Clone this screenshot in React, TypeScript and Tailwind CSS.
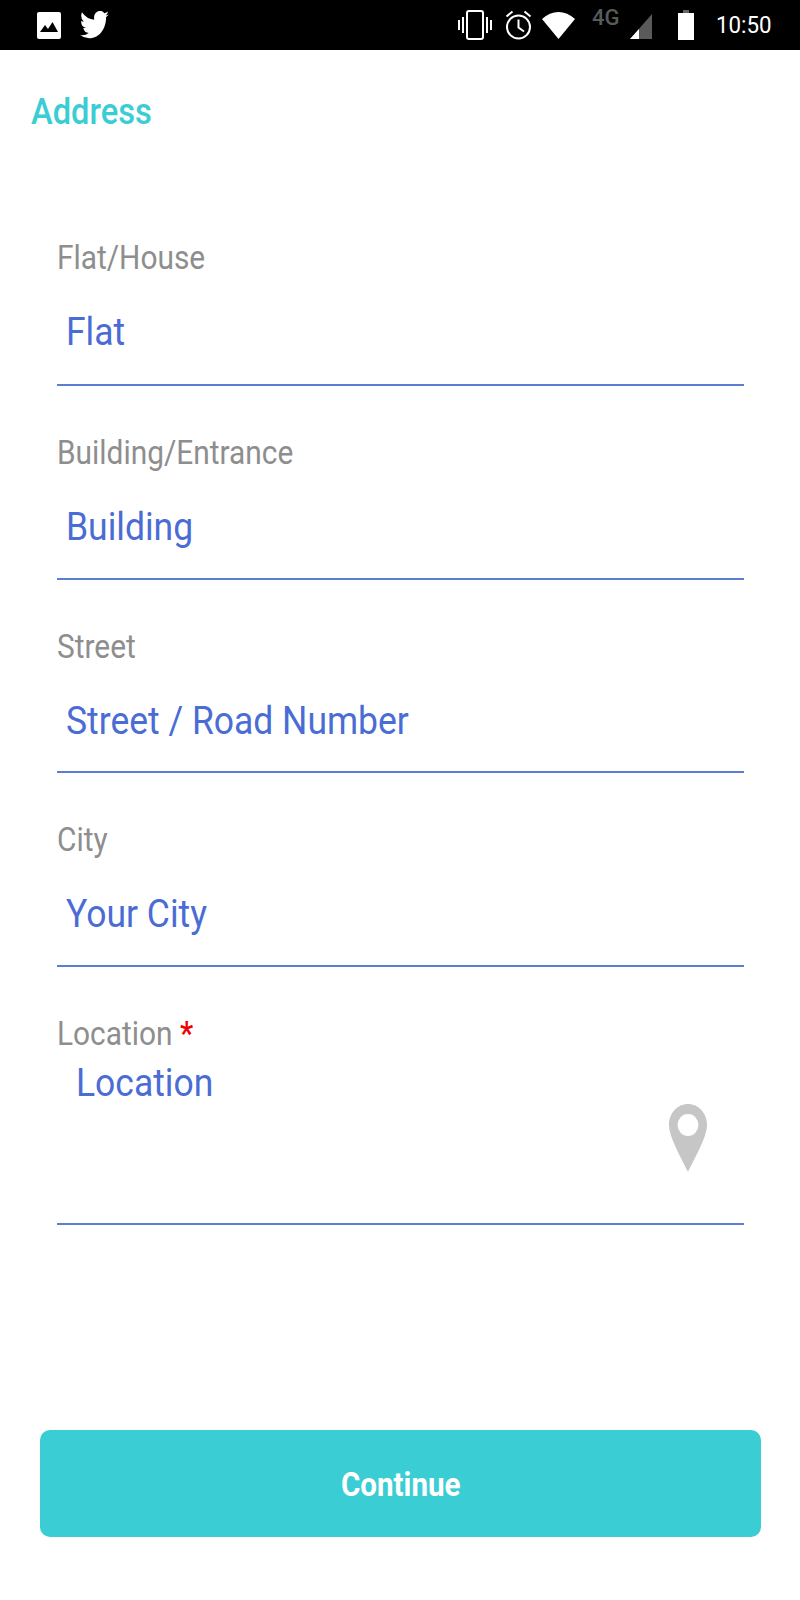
const fields = [
  { label: 'Flat/House', value: 'Flat' },
  { label: 'Building/Entrance', value: 'Building' },
  { label: 'Street', value: 'Street / Road Number' },
  { label: 'City', value: 'Your City' },
]

function StatusBar() {
  return (
    <div className="flex h-[50px] items-center justify-between bg-black pl-[37px] pr-[29px] text-white">
      <div className="flex items-center gap-[19px]">
        {/* image notification */}
        <svg width="24" height="27" viewBox="0 0 24 27">
          <rect x="0" y="0" width="24" height="27" rx="2" fill="#fff" />
          <path d="M3 20 L8 13 L11 17 L15.5 10 L21 20 Z" fill="#000" />
        </svg>
        {/* twitter */}
        <svg width="29" height="28" viewBox="0 1 24 19.5" preserveAspectRatio="none" fill="#fff">
          <path d="M23.95 3.3a9.8 9.8 0 0 1-2.82.77 4.9 4.9 0 0 0 2.16-2.71 9.9 9.9 0 0 1-3.12 1.19 4.92 4.92 0 0 0-8.38 4.48A14 14 0 0 1 1.64 1.9a4.82 4.82 0 0 0-.67 2.47 4.92 4.92 0 0 0 2.19 4.1 4.9 4.9 0 0 1-2.23-.62v.06a4.92 4.92 0 0 0 3.95 4.83 5 5 0 0 1-2.21.08 4.94 4.94 0 0 0 4.6 3.42A9.87 9.87 0 0 1 0 17.77 14 14 0 0 0 7.55 20c9.05 0 14-7.5 14-13.98 0-.21 0-.42-.02-.63a9.9 9.9 0 0 0 2.46-2.55z" />
        </svg>
      </div>
      <div className="flex items-center">
        {/* vibrate */}
        <svg width="34" height="30" viewBox="0 0 34 30" fill="none" stroke="#fff" strokeWidth="2">
          <rect x="9" y="1" width="16" height="28" rx="2" />
          <path d="M5 7v16M1 10v10M29 7v16M33 10v10" />
        </svg>
        {/* alarm */}
        <svg className="ml-[13px]" width="27" height="30" viewBox="0 0 27 30" fill="none" stroke="#fff" strokeWidth="2">
          <circle cx="13.5" cy="17" r="11.5" />
          <path d="M13.5 9.5v8l5.5 4M1.5 6.5l6-5M25.5 6.5l-6-5" />
        </svg>
        {/* wifi */}
        <svg className="ml-[10px]" width="33" height="28" viewBox="0 0 33 28">
          <path d="M0 8 C10 -1.5 23 -1.5 33 8 L16.5 28 Z" fill="#fff" />
        </svg>
        <div className="relative ml-[18px] h-[30px] w-[85px]">
          <span className="absolute left-[-1px] top-[-4px] text-[22px] font-medium leading-[24px] text-[#5a5a5a]">4G</span>
          {/* signal */}
          <svg className="absolute left-[37px] top-[4px]" width="22" height="25" viewBox="0 0 22 25">
            <path d="M0 25 L22 0 V25 Z" fill="#5a5a5a" />
            <path d="M0 25 L9 15 V25 Z" fill="#fff" />
          </svg>
        </div>
        {/* battery */}
        <svg width="16" height="30" viewBox="0 0 16 30">
          <path d="M5 0h6v3h5v27H0V3h5z" fill="#fff" />
          <rect x="5" y="0" width="6" height="3" fill="#666" />
        </svg>
        <div className="ml-[22px] w-[55px]">
          <span className="block origin-left scale-x-[0.93] whitespace-nowrap text-[24px] leading-none">10:50</span>
        </div>
      </div>
    </div>
  )
}

function Field({ label, value }: { label: string; value: string }) {
  return (
    <div className="h-[193.5px] border-b-2 border-[#5b7fd0] pt-[49px] first:h-[193px] first:pt-[47px]">
      <div className="origin-left scale-x-[0.905] text-[33px] leading-[36px] text-[#8e8e8e]">{label}</div>
      <div className="mt-[34px] origin-left translate-x-[9px] scale-x-[0.91] text-[39px] leading-[44px] text-[#4a6cd4]">
        {value}
      </div>
    </div>
  )
}

export default function App() {
  return (
    <div className="flex h-[1600px] w-[800px] flex-col bg-white font-['Roboto',sans-serif]">
      <StatusBar />
      <div className="origin-left translate-x-[31px] scale-x-[0.907] pt-[40px] text-[36px] font-medium leading-[44px] text-[#3acdd4]">
        Address
      </div>
      <div className="mx-[57px] mt-[59px] w-[687px]">
        {fields.map((f) => (
          <Field key={f.label} label={f.label} value={f.value} />
        ))}
        <div className="relative h-[258px] border-b-2 border-[#5b7fd0] pt-[49px]">
          <div className="origin-left scale-x-[0.905] text-[33px] leading-[36px] text-[#8e8e8e]">
            Location <span className="font-medium text-[#ee0000]">*</span>
          </div>
          <div className="origin-left translate-x-[19px] scale-x-[0.91] pt-[9px] text-[39px] leading-[44px] text-[#4a6cd4]">
            Location
          </div>
          {/* location pin */}
          <svg className="absolute right-[37px] top-[137px]" width="38" height="68" viewBox="0 0 40 68" preserveAspectRatio="none">
            <path
              fillRule="evenodd"
              d="M20 0C31 0 40 9 40 21C40 33 27 54 20 68C13 54 0 33 0 21C0 9 9 0 20 0ZM20 10A11 11 0 1 0 20 32A11 11 0 1 0 20 10Z"
              fill="#c6c6c6"
            />
          </svg>
        </div>
      </div>
      <div className="mx-[40px] mt-[205px] flex h-[107px] w-[721px] items-center justify-center rounded-[10px] bg-[#3acdd4] pt-[3px] text-white">
        <span className="scale-x-[0.87] text-[34px] font-bold">Continue</span>
      </div>
    </div>
  )
}
